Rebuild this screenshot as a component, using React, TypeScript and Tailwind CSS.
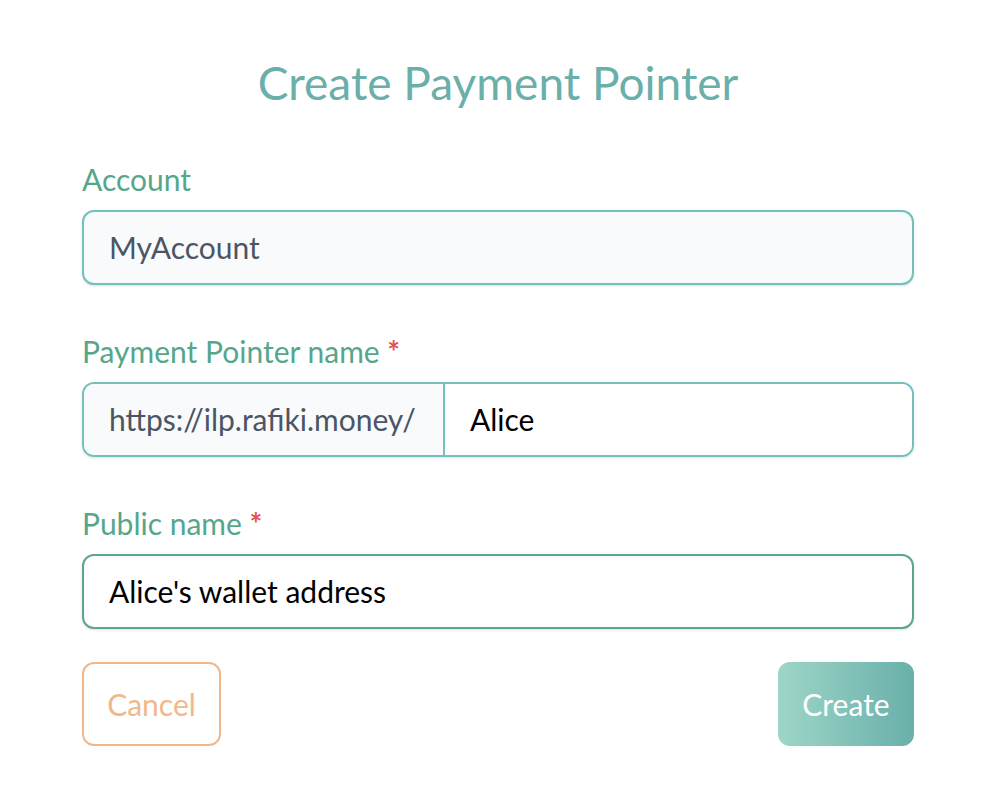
export default function App() {
	return (
		<div className="min-h-[800px] w-[1006px] bg-white font-['Lato',sans-serif]">
			<div className="ml-[82px] flex w-[832px] flex-col pt-[48px]">
				<h1 className="text-center text-[46px] leading-[70px] text-[#6aafaa]">Create Payment Pointer</h1>

				<div className="mt-[40px] flex flex-col">
					<label className="text-[30px] leading-[42px] text-[#56a68b]">Account</label>
					<div className="mt-[10px] flex h-[75px] items-center rounded-xl border-2 border-[#74c1bb] bg-[#f8fafc] px-[25px] text-[30px] text-[#4b5563] shadow-sm">
						MyAccount
					</div>
				</div>

				<div className="mt-[45px] flex flex-col">
					<label className="text-[30px] leading-[42px] text-[#56a68b]">
						Payment Pointer name <span className="font-bold text-[#e05353]">*</span>
					</label>
					<div className="mt-[10px] flex h-[75px] overflow-hidden rounded-xl border-2 border-[#74c1bb] shadow-sm">
						<div className="flex w-[361px] items-center whitespace-nowrap border-r-2 border-[#74c1bb] bg-[#f8fafc] px-[25px] text-[30px] text-[#4b5563]">
							https://ilp.rafiki.money/
						</div>
						<div className="flex flex-1 items-center bg-white px-[25px] text-[30px] text-black">Alice</div>
					</div>
				</div>

				<div className="mt-[45px] flex flex-col">
					<label className="text-[30px] leading-[42px] text-[#56a68b]">
						Public name <span className="font-bold text-[#e05353]">*</span>
					</label>
					<div className="mt-[10px] flex h-[75px] items-center rounded-xl border-2 border-[#5ca58e] bg-white px-[25px] text-[30px] text-black shadow-sm">
						Alice's wallet address
					</div>
				</div>

				<div className="mt-[33px] flex items-center justify-between">
					<button className="flex h-[84px] w-[139px] items-center justify-center rounded-xl border-2 border-[#f0b88a] bg-white text-[30px] text-[#f0b88a]">
						Cancel
					</button>
					<button className="flex h-[84px] w-[136px] items-center justify-center rounded-xl bg-gradient-to-r from-[#9dd6c7] to-[#6aafaa] text-[30px] text-white">
						Create
					</button>
				</div>
			</div>
		</div>
	);
}
